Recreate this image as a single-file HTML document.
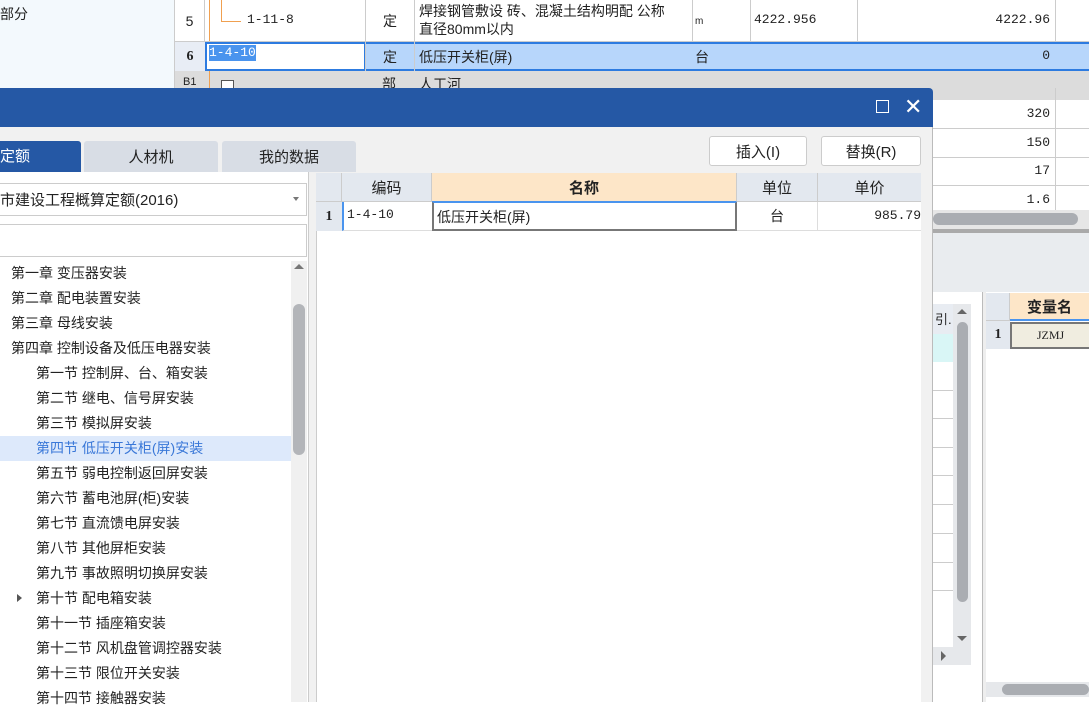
<!DOCTYPE html>
<html><head><meta charset="utf-8"><style>
*{margin:0;padding:0;box-sizing:border-box}
body{width:1089px;height:702px;overflow:hidden;position:relative;background:#fff;font-family:"Liberation Sans","Noto Sans CJK SC",sans-serif;font-size:14px;color:#222}
.a{position:absolute}
.c{display:flex;align-items:center;justify-content:center}
.l{display:flex;align-items:center;padding-left:4px}
.mono{font-family:"Liberation Mono","Noto Sans CJK SC",monospace;font-size:13px}
.tr{position:absolute;left:0;height:25px;line-height:25px;white-space:nowrap}
</style></head><body>
<div class="a" style="left:0;top:0;width:175px;height:88px;background:#f3f9fd;border-right:1px solid #ccc"></div>
<div class="a" style="left:0;top:4px">部分</div>
<div class="a" style="left:175px;top:0;width:914px;height:88px;background:#fff"></div>
<div class="a c" style="left:175px;top:0;width:30px;height:42px;border-right:1px solid #ccc;border-bottom:1px solid #ccc">5</div>
<div class="a" style="left:209px;top:0;width:1px;height:88px;background:#f0a050"></div>
<div class="a" style="left:221px;top:0;width:1px;height:22px;background:#f0a050"></div>
<div class="a" style="left:221px;top:21px;width:20px;height:1px;background:#f0a050"></div>
<div class="a mono" style="left:247px;top:12px">1-11-8</div>
<div class="a c" style="left:365px;top:0;width:50px;height:42px;border-left:1px solid #ccc;border-right:1px solid #ccc">定</div>
<div class="a" style="left:419px;top:2px;line-height:18px;font-size:14px">焊接钢管敷设 砖、混凝土结构明配 公称<br>直径80mm以内</div>
<div class="a" style="left:692px;top:0;width:1px;height:88px;background:#ccc"></div>
<div class="a" style="left:695px;top:16px;font-size:10px">m</div>
<div class="a" style="left:750px;top:0;width:1px;height:210px;background:#ccc"></div>
<div class="a mono" style="left:754px;top:12px">4222.956</div>
<div class="a" style="left:857px;top:0;width:1px;height:210px;background:#ccc"></div>
<div class="a" style="left:1055px;top:0;width:1px;height:210px;background:#ccc"></div>
<div class="a mono" style="left:960px;top:12px;width:90px;text-align:right">4222.96</div>
<div class="a" style="left:175px;top:41px;width:914px;height:1px;background:#ccc"></div>
<div class="a c" style="left:175px;top:42px;width:30px;height:29px;background:#e8edf5;font-weight:bold;font-family:'Liberation Serif',serif">6</div>
<div class="a" style="left:365px;top:42px;width:724px;height:29px;background:#b7d6fb;border-top:2px solid #2d7be0;border-bottom:2px solid #2d7be0"></div>
<div class="a" style="left:205px;top:42px;width:161px;height:29px;background:#fff;border:2px solid #2d7be0"></div>
<div class="a mono" style="left:209px;top:45px;background:#4a94ee;color:#fff;line-height:16px">1-4-10</div>
<div class="a c" style="left:365px;top:42px;width:50px;height:29px;border-left:1px solid #ccc;border-right:1px solid #ccc">定</div>
<div class="a" style="left:419px;top:47px">低压开关柜(屏)</div>
<div class="a" style="left:695px;top:47px">台</div>
<div class="a mono" style="left:960px;top:48px;width:90px;text-align:right">0</div>
<div class="a" style="left:175px;top:71px;width:914px;height:29px;background:#dcdcdc"></div>
<div class="a" style="left:183px;top:76px;font-size:11px">B1</div>
<div class="a" style="left:209px;top:71px;width:1px;height:17px;background:#f0a050"></div>
<div class="a" style="left:221px;top:80px;width:13px;height:13px;border:1px solid #555;background:#fff"></div>
<div class="a" style="left:382px;top:74px">部</div>
<div class="a" style="left:419px;top:74px">人工河</div>
<div class="a" style="left:933px;top:100px;width:156px;height:112px;background:#fff"></div>
<div class="a" style="left:1055px;top:88px;width:1px;height:124px;background:#ccc"></div>
<div class="a mono" style="left:960px;top:106px;width:90px;text-align:right">320</div>
<div class="a" style="left:933px;top:128px;width:156px;height:1px;background:#ccc"></div>
<div class="a mono" style="left:960px;top:135px;width:90px;text-align:right">150</div>
<div class="a" style="left:933px;top:157px;width:156px;height:1px;background:#ccc"></div>
<div class="a mono" style="left:960px;top:163px;width:90px;text-align:right">17</div>
<div class="a" style="left:933px;top:185px;width:156px;height:1px;background:#ccc"></div>
<div class="a mono" style="left:960px;top:192px;width:90px;text-align:right">1.6</div>
<div class="a" style="left:933px;top:210px;width:156px;height:20px;background:#e6e6e6"></div>
<div class="a" style="left:933px;top:213px;width:145px;height:12px;background:#aaadb2;border-radius:6px"></div>
<div class="a" style="left:933px;top:229px;width:156px;height:4px;background:#aaa"></div>
<div class="a" style="left:933px;top:233px;width:156px;height:59px;background:#e9ecef"></div>
<div class="a" style="left:933px;top:292px;width:50px;height:410px;background:#fff;border-right:1px solid #bbb"></div>
<div class="a" style="left:933px;top:304px;width:20px;height:30px;background:#e8ecf2;font-size:13px;padding-top:5px;padding-left:2px">引.</div>
<div class="a" style="left:933px;top:334px;width:20px;height:28px;background:#d9f6f6"></div>
<div class="a" style="left:933px;top:390px;width:20px;height:1px;background:#ccc"></div>
<div class="a" style="left:933px;top:418px;width:20px;height:1px;background:#ccc"></div>
<div class="a" style="left:933px;top:447px;width:20px;height:1px;background:#ccc"></div>
<div class="a" style="left:933px;top:475px;width:20px;height:1px;background:#ccc"></div>
<div class="a" style="left:933px;top:504px;width:20px;height:1px;background:#ccc"></div>
<div class="a" style="left:933px;top:533px;width:20px;height:1px;background:#ccc"></div>
<div class="a" style="left:933px;top:562px;width:20px;height:1px;background:#ccc"></div>
<div class="a" style="left:933px;top:590px;width:20px;height:1px;background:#ccc"></div>
<div class="a" style="left:953px;top:304px;width:18px;height:343px;background:#e6e8eb"></div>
<div class="a" style="left:957px;top:322px;width:11px;height:280px;background:#aaadb2;border-radius:6px"></div>
<div class="a" style="left:957px;top:309px;width:0;height:0;border-left:5px solid transparent;border-right:5px solid transparent;border-bottom:5px solid #666"></div>
<div class="a" style="left:957px;top:636px;width:0;height:0;border-left:5px solid transparent;border-right:5px solid transparent;border-top:5px solid #666"></div>
<div class="a" style="left:933px;top:647px;width:38px;height:18px;background:#e6e8eb"></div>
<div class="a" style="left:941px;top:651px;width:0;height:0;border-top:5px solid transparent;border-bottom:5px solid transparent;border-left:5px solid #666"></div>
<div class="a" style="left:983px;top:292px;width:3px;height:410px;background:#eee"></div>
<div class="a" style="left:986px;top:292px;width:103px;height:410px;background:#fff"></div>
<div class="a" style="left:986px;top:293px;width:24px;height:28px;background:#e3e8ef;border-right:1px solid #ccc;border-bottom:1px solid #ccc"></div>
<div class="a c" style="left:1010px;top:293px;width:79px;height:28px;background:#fde6c8;font-weight:bold;font-size:15px;border-bottom:2px solid #4a94ee">变量名</div>
<div class="a c" style="left:986px;top:321px;width:24px;height:28px;background:#e3e8ef;font-weight:bold;font-family:'Liberation Serif',serif">1</div>
<div class="a c" style="left:1010px;top:322px;width:79px;height:27px;background:#f0ede0;border:2px solid #777;border-right:none;font-family:'Liberation Serif',serif;font-size:12px">JZMJ</div>
<div class="a" style="left:986px;top:682px;width:103px;height:15px;background:#e6e8eb"></div>
<div class="a" style="left:1002px;top:684px;width:87px;height:11px;background:#aaadb2;border-radius:6px"></div>
<div class="a" style="left:0;top:88px;width:933px;height:39px;background:#2558a5;border-top-right-radius:4px"></div>
<div class="a" style="left:876px;top:100px;width:13px;height:13px;border:1.5px solid #fff"></div>
<div class="a" style="left:904px;top:93px;color:#fff;font-size:22px;line-height:28px">✕</div>
<div class="a" style="left:0;top:127px;width:933px;height:575px;background:#f1f1f1;border-right:1px solid #bbb"></div>
<div class="a" style="left:0;top:141px;width:81px;height:31px;background:#2558a5;color:#fff;font-size:15px;border-top-right-radius:3px;line-height:31px;padding-left:0">定额</div>
<div class="a c" style="left:84px;top:141px;width:134px;height:31px;background:#d8dde5;font-size:15px;border-radius:3px 3px 0 0">人材机</div>
<div class="a c" style="left:222px;top:141px;width:134px;height:31px;background:#d8dde5;font-size:15px;border-radius:3px 3px 0 0">我的数据</div>
<div class="a c" style="left:709px;top:136px;width:98px;height:30px;background:#fff;border:1px solid #ccc;border-radius:3px;font-size:15px">插入(I)</div>
<div class="a c" style="left:821px;top:136px;width:100px;height:30px;background:#fff;border:1px solid #ccc;border-radius:3px;font-size:15px">替换(R)</div>
<div class="a" style="left:0;top:172px;width:309px;height:530px;background:#fff;border-right:1px solid #ccc"></div>
<div class="a l" style="left:0;top:183px;width:307px;height:33px;border:1px solid #ccc;border-left:none;font-size:15px;padding-left:0">市建设工程概算定额(2016)</div>
<div class="a" style="left:293px;top:197px;width:0;height:0;border-left:3.5px solid transparent;border-right:3.5px solid transparent;border-top:4px solid #777"></div>
<div class="a" style="left:0;top:224px;width:307px;height:33px;border:1px solid #ccc;border-left:none"></div>
<div class="a" style="left:0;top:261px;width:291px;height:441px">
<div class="tr" style="top:0;padding-left:11px">第一章 变压器安装</div>
<div class="tr" style="top:25px;padding-left:11px">第二章 配电装置安装</div>
<div class="tr" style="top:50px;padding-left:11px">第三章 母线安装</div>
<div class="tr" style="top:75px;padding-left:11px">第四章 控制设备及低压电器安装</div>
<div class="tr" style="top:100px;padding-left:36px">第一节 控制屏、台、箱安装</div>
<div class="tr" style="top:125px;padding-left:36px">第二节 继电、信号屏安装</div>
<div class="tr" style="top:150px;padding-left:36px">第三节 模拟屏安装</div>
<div class="tr" style="top:175px;padding-left:36px;width:291px;background:#dde9fb;color:#3a78d8">第四节 低压开关柜(屏)安装</div>
<div class="tr" style="top:200px;padding-left:36px">第五节 弱电控制返回屏安装</div>
<div class="tr" style="top:225px;padding-left:36px">第六节 蓄电池屏(柜)安装</div>
<div class="tr" style="top:250px;padding-left:36px">第七节 直流馈电屏安装</div>
<div class="tr" style="top:275px;padding-left:36px">第八节 其他屏柜安装</div>
<div class="tr" style="top:300px;padding-left:36px">第九节 事故照明切换屏安装</div>
<div class="tr" style="top:325px;padding-left:36px">第十节 配电箱安装</div>
<div class="a" style="left:17px;top:333px;width:0;height:0;border-top:4px solid transparent;border-bottom:4px solid transparent;border-left:5px solid #555"></div>
<div class="tr" style="top:350px;padding-left:36px">第十一节 插座箱安装</div>
<div class="tr" style="top:375px;padding-left:36px">第十二节 风机盘管调控器安装</div>
<div class="tr" style="top:400px;padding-left:36px">第十三节 限位开关安装</div>
<div class="tr" style="top:425px;padding-left:36px">第十四节 接触器安装</div>
</div>
<div class="a" style="left:291px;top:261px;width:16px;height:441px;background:#f0f0f0"></div>
<div class="a" style="left:294px;top:264px;width:0;height:0;border-left:5px solid transparent;border-right:5px solid transparent;border-bottom:5px solid #777"></div>
<div class="a" style="left:293px;top:304px;width:12px;height:151px;background:#b3b5b9;border-radius:6px"></div>
<div class="a" style="left:316px;top:173px;width:605px;height:529px;background:#fff;border-left:1px solid #ccc"></div>
<div class="a" style="left:316px;top:173px;width:26px;height:29px;background:#e3e8ef;border-right:1px solid #ccc;border-bottom:1px solid #ccc"></div>
<div class="a c" style="left:342px;top:173px;width:90px;height:29px;background:#e3e8ef;border-right:1px solid #ccc;border-bottom:1px solid #ccc;font-size:15px">编码</div>
<div class="a c" style="left:432px;top:173px;width:305px;height:29px;background:#fde6c8;border-right:1px solid #ccc;border-bottom:1px solid #4a94ee;font-size:15px;font-weight:bold">名称</div>
<div class="a c" style="left:737px;top:173px;width:81px;height:29px;background:#e3e8ef;border-right:1px solid #ccc;border-bottom:1px solid #ccc;font-size:15px">单位</div>
<div class="a c" style="left:818px;top:173px;width:103px;height:29px;background:#e3e8ef;border-bottom:1px solid #ccc;font-size:15px">单价</div>
<div class="a c" style="left:316px;top:202px;width:26px;height:29px;background:#e3e8ef;font-weight:bold;font-family:'Liberation Serif',serif">1</div>
<div class="a mono" style="left:342px;top:202px;width:90px;height:29px;border-left:2px solid #4a94ee;border-bottom:1px solid #ddd;padding:5px 0 0 3px">1-4-10</div>
<div class="a" style="left:432px;top:202px;width:305px;height:29px;border:2px solid #777;border-top:1px solid #4a94ee;padding:4px 0 0 3px">低压开关柜(屏)</div>
<div class="a c" style="left:737px;top:202px;width:81px;height:29px;border-right:1px solid #ddd;border-bottom:1px solid #ddd">台</div>
<div class="a mono" style="left:818px;top:202px;width:103px;height:29px;border-bottom:1px solid #ddd;text-align:right;padding-top:6px;overflow:hidden;white-space:nowrap">985.79</div>
</body></html>
